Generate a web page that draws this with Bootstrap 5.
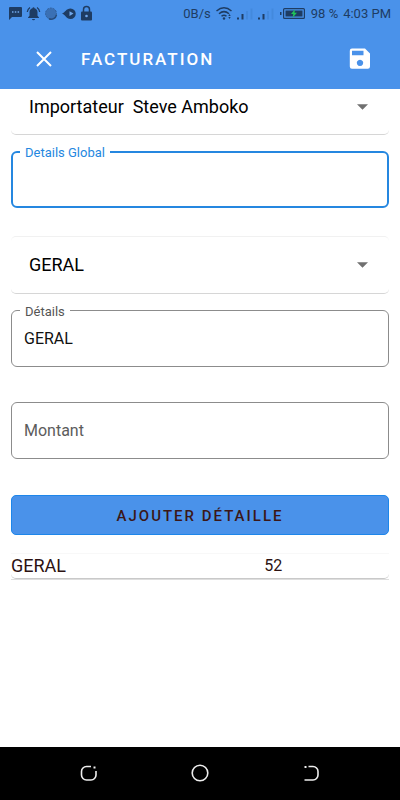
<!DOCTYPE html>
<html lang="fr">
<head>
<meta charset="utf-8">
<meta name="viewport" content="width=device-width, initial-scale=1">
<title>Facturation</title>
<link href="https://cdn.jsdelivr.net/npm/bootstrap@5.3.0/dist/css/bootstrap.min.css" rel="stylesheet">
<style>
  body { font-family: Roboto, "Noto Sans", sans-serif; color: #000; background: #fff; }
  .app-top { background: #4a92ea; }
  .status-bar { height: 28px; padding: 0 9px 0 8px; font-size: 13px; line-height: 28px; color: #1e3c63; }
  .status-items { gap: 5px; }
  .toolbar { height: 61px; padding: 0 24px 0 28px; }
  .toolbar h1 { font-size: 17px; line-height: 24px; letter-spacing: 2px; font-weight: 500; margin-left: 21px; }
  .icon-button { width: 32px; height: 32px; }
  .page-body { padding: 0 11px; }
  .picker { border-radius: 5px; border-top: 1px solid #f1f1f1; border-bottom: 1px solid #d6d6d6; }
  .picker-cut { border-top: 0; border-radius: 0 0 5px 5px; padding-bottom: 9px; }
  .picker select { height: 36px; padding: 0 40px 0 18px; font-size: 18px; line-height: 24px; color: #000; border: 0; background-color: transparent;
    background-image: url("data:image/svg+xml,%3Csvg xmlns='http://www.w3.org/2000/svg' viewBox='0 0 10 5'%3E%3Cpath fill='%23707070' d='M0 0h10L5 5z'/%3E%3C/svg%3E");
    background-size: 11px 6px; background-position: right 21px center; }
  .picker-full select { height: 56px; }
  .outlined input { height: 57px; padding: 0 12px; font-size: 16px; line-height: 24px; color: #111; border: 1px solid #8c8c8c; border-radius: 6px; background: #fff; }
  .outlined input::placeholder { color: #5c5c5c; opacity: 1; }
  .outlined label { left: 9px; top: -7px; padding: 0 5px; font-size: 13px; line-height: 18px; color: #555; background: #fff; }
  .outlined-active input, .outlined input:focus { border: 2px solid #2587e0; box-shadow: none; }
  .outlined-active label { color: #2587e0; }
  .gap-s { margin-top: 16px; }
  .gap-m { margin-top: 28px; }
  .gap-l { margin-top: 35px; }
  .add-btn, .add-btn:hover { height: 40px; padding: 2px 0 0; font-size: 15px; line-height: 24px; letter-spacing: 2px; font-weight: 500; color: #3b1717; background: #4a92ea; border: 1px solid #1d86ea; border-radius: 5px; }
  .add-btn { margin-top: 36px; }
  .entries { margin-top: 18px; border-collapse: separate; border-spacing: 0; border-bottom: 1px solid #dedede; }
  .entries td { height: 26px; padding: 0; line-height: 24px; color: #2c1212; border-top: 1px solid #f8f8f8; border-bottom: 1px solid #c9c9c9; }
  .entries td:first-child { width: 67%; font-size: 18px; border-bottom-left-radius: 5px; }
  .entries td:last-child { font-size: 16px; border-bottom-right-radius: 5px; }
  .sys-nav { height: 53px; padding: 0 77px 1px; background: #000; }
  .sys-nav button { width: 24px; height: 24px; }
</style>
<script src="https://cdn.jsdelivr.net/npm/bootstrap@5.3.0/dist/js/bootstrap.bundle.min.js"></script>
</head>
<body class="d-flex flex-column min-vh-100">

<header class="app-top">
  <div class="status-bar d-flex align-items-center justify-content-between">
    <svg width="86" height="18" viewBox="0 0 86 18" aria-hidden="true">
      <g fill="#1e3c63">
        <path d="M2 2h11a1 1 0 0 1 1 1v8a1 1 0 0 1-1 1H4l-3 3V3a1 1 0 0 1 1-1z"/>
        <path d="M25.500 2.200a1 1 0 0 1 1 1c1.900.5 3 2 3 4v3.600l1.500 1.600v.6h-11v-.6l1.500-1.600V7.200c0-2 1.100-3.500 3-4a1 1 0 0 1 1-1zM24 14h3a1.500 1.200 0 0 1-3 0z"/>
        <path d="M54 8.500C57 7.700 58.200 3.500 62.500 3.500a5 5 0 0 1 0 10.500C58.200 14 57 9.300 54 8.500z"/>
        <path d="M74 6.500h9a1 1 0 0 1 1 1V14.500a1 1 0 0 1-1 1h-9a1 1 0 0 1-1-1V7.500a1 1 0 0 1 1-1z"/>
      </g>
      <path d="M22 2.500q-2.300 1.500-2.700 4.500M29 2.500q2.300 1.500 2.700 4.500" fill="none" stroke="#1e3c63" stroke-width="1.300"/>
      <circle cx="43" cy="8.500" r="5.500" fill="#3a70b5" stroke="#315f9a" stroke-dasharray="2 1"/>
      <path d="M41 13.800a5.500 5.500 0 0 0 7.500-4" fill="none" stroke="#274c7c" stroke-width="1.500"/>
      <path d="M75.500 7V4.500a3 3 0 0 1 6 0V7" fill="none" stroke="#1e3c63" stroke-width="1.500"/>
      <path d="M4 6.300h1.500v1.500H4zM6.800 6.300h1.500v1.500H6.800zM9.600 6.300h1.500v1.500H9.600zM61.500 6.300l4 2.300-4 2.300z" fill="#70a8ed"/>
      <circle cx="78.500" cy="11" r="1.300" fill="#70a8ed"/>
    </svg>
    <div class="status-items d-flex align-items-center">
      <span>0B/s</span>
      <svg width="90" height="18" viewBox="0 0 90 18" aria-hidden="true">
        <g fill="none" stroke="#1e3c63" stroke-width="1.500">
          <path d="M.5 6Q8-.5 15.500 6M3 8.800q5-4.300 10 0M5.500 11.300q2.500-2.200 5 0"/>
        </g>
        <circle cx="8" cy="13.500" r="1.200" fill="#1e3c63"/>
        <path d="M13.500 9l1.200 2h-2.400zM13.500 14l1.200-2h-2.400z" fill="#1e3c63"/>
        <path d="M21 12.500h2v2h-2zM25.500 9h2v5.500h-2zM42 12.500h2v2h-2zM46.500 9h2v5.500h-2z" fill="#1e3c63"/>
        <path d="M30 6h2v8.500h-2zM34.500 3.500h2v11h-2zM51 6h2v8.500h-2zM55.500 3.500h2v11h-2z" fill="#4389dd"/>
        <path d="M64 7h1.500v3H64z" fill="#1e3c63"/>
        <rect x="67.600" y="3.600" width="20.800" height="9.800" rx="1" fill="none" stroke="#1e3c63" stroke-width="1.200"/>
        <path d="M69.500 5.500h17v6h-17z" fill="#1e3c63"/>
        <path d="M79 4.200l-4 4.800h2.300l-.8 3.800 4.500-5.100h-2.500z" fill="#20c45a"/>
      </svg>
      <span>98 %</span>
      <span>4:03 PM</span>
    </div>
  </div>
  <div class="toolbar d-flex align-items-center">
    <button type="button" class="icon-button btn p-0 border-0 d-flex align-items-center justify-content-center" aria-label="Fermer">
      <svg width="16" height="16" viewBox="0 0 16 16"><path d="M1 1l14 14M15 1L1 15" stroke="#fff" stroke-width="2" fill="none"/></svg>
    </button>
    <h1 class="mb-0 text-white">FACTURATION</h1>
    <button type="button" class="icon-button btn p-0 border-0 ms-auto d-flex align-items-center justify-content-center" aria-label="Enregistrer">
      <svg width="22" height="22" viewBox="0 0 22 22"><path fill="#fff" fill-rule="evenodd" d="M3 .5h13L21 5.500V18.500a2.200 2.200 0 0 1-2.200 2.200H3A2.200 2.200 0 0 1 .8 18.500V2.700A2.200 2.200 0 0 1 3 .5zM3 2.800v4.400h11.500V2.800zM11 11.700a3.200 3.200 0 1 0 .01 0z"/></svg>
    </button>
  </div>
</header>

<main class="page-body flex-grow-1">
  <div class="picker picker-cut">
    <select class="form-select" aria-label="Importateur">
      <option>Importateur&nbsp; Steve Amboko</option>
    </select>
  </div>

  <div class="outlined outlined-active position-relative gap-s">
    <input type="text" class="form-control" id="global">
    <label class="position-absolute" for="global">Details Global</label>
  </div>

  <div class="picker picker-full gap-m">
    <select class="form-select" aria-label="Type">
      <option>GERAL</option>
    </select>
  </div>

  <div class="outlined position-relative gap-s">
    <input type="text" class="form-control" id="details" value="GERAL">
    <label class="position-absolute" for="details">Détails</label>
  </div>

  <div class="outlined gap-l">
    <input type="text" class="form-control" placeholder="Montant" aria-label="Montant">
  </div>

  <button type="button" class="btn add-btn w-100">AJOUTER DÉTAILLE</button>

  <table class="entries w-100">
    <tbody><tr><td>GERAL</td><td>52</td></tr></tbody>
  </table>
</main>

<nav class="sys-nav d-flex align-items-center justify-content-between" aria-label="Système">
  <button type="button" class="btn p-0 border-0 d-flex" aria-label="Récents">
    <svg width="24" height="24" viewBox="0 0 24 24" fill="none" stroke="#eee" stroke-width="1.600"><path d="M14 5.500H9.500a5 5 0 0 0-5 5V14a5 5 0 0 0 5 5H14a5 5 0 0 0 5-5V10"/><path d="M16.500 6.500h2" stroke-width="2"/></svg>
  </button>
  <button type="button" class="btn p-0 border-0 d-flex" aria-label="Accueil">
    <svg width="24" height="24" viewBox="0 0 24 24" fill="none" stroke="#eee" stroke-width="1.600"><circle cx="12" cy="12" r="7.800"/></svg>
  </button>
  <button type="button" class="btn p-0 border-0 d-flex" aria-label="Retour">
    <svg width="24" height="24" viewBox="0 0 24 24" fill="none" stroke="#eee" stroke-width="1.600"><path d="M9.500 5.500H14a5 5 0 0 1 5 5V14a5 5 0 0 1-5 5H5.500"/><path d="M5.500 6h2" stroke-width="2"/></svg>
  </button>
</nav>
</body>
</html>
